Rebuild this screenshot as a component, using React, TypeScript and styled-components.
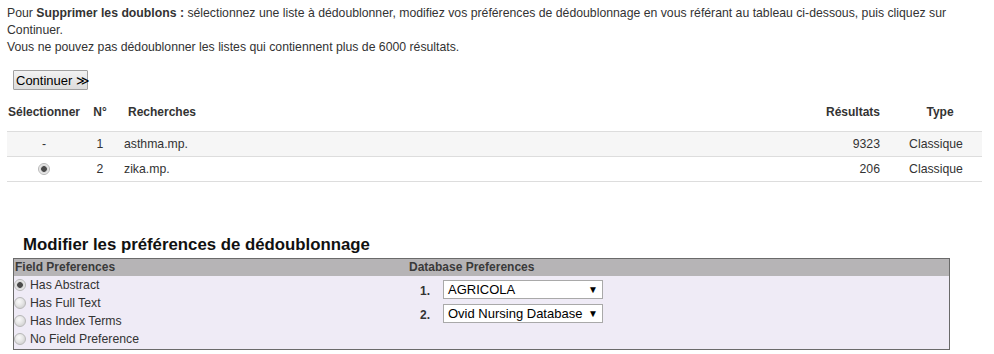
import React from 'react';
import styled, {createGlobalStyle} from 'styled-components';

const GlobalStyle = createGlobalStyle`
  body {
    margin: 0;
    background: #fff;
    font-family: "Liberation Sans", Arial, sans-serif;
    font-size: 12.25px;
    color: #333;
  }
`

const Page = styled.div`
  padding: 5px 7px 0 7px;
  width: 994px;
  box-sizing: border-box;
`

const Intro = styled.p`
  margin: 0;
  line-height: 17px;
  width: 975px;
`

const ContinueButton = styled.button`
  margin: 14px 0 0 6px;
  height: 20px;
  width: 75px;
  padding: 0 2px;
  font-family: "Liberation Sans", Arial, sans-serif;
  font-size: 13px;
  color: #000;
  background: linear-gradient(#f2f2f2, #dcdcdc);
  border: 1px solid #a0a0a0;
  border-radius: 1px;
  white-space: nowrap;
`

const ResultsTable = styled.table`
  margin-top: 3px;
  width: 975px;
  border-collapse: collapse;
  table-layout: fixed;
`

const HeadCell = styled.th<{align?: string; width?: number; pad?: string}>`
  text-align: ${(p) => p.align || 'left'};
  ${(p) => (p.width ? `width: ${p.width}px;` : '')}
  font-size: 12px;
  font-weight: bold;
  height: 38px;
  padding: ${(p) => p.pad || '0'};
  vertical-align: middle;
  color: #333;
  white-space: nowrap;
  box-sizing: border-box;
`

const Row = styled.tr<{shaded?: boolean}>`
  background: ${(p) => (p.shaded ? '#f6f6f6' : '#fff')};
  border-top: 1px solid #ddd;
  border-bottom: 1px solid #ddd;
`

const Cell = styled.td<{align?: string; pad?: string}>`
  text-align: ${(p) => p.align || 'left'};
  height: 24px;
  padding: ${(p) => p.pad || '0'};
  vertical-align: middle;
`

const RadioDot = styled.span<{checked?: boolean}>`
  display: inline-block;
  flex: none;
  width: 12px;
  height: 12px;
  border-radius: 50%;
  border: 1px solid #b8b8b8;
  background: ${(p) => (p.checked
      ? 'radial-gradient(circle, #4a4a4a 0 2.5px, #d4d4d4 3.2px, #f0f0f0 5px)'
      : 'radial-gradient(circle at 40% 35%, #fafafa 0, #e6e6e6 4px, #d8d8d8 6px)')};
  vertical-align: middle;
  box-sizing: border-box;
`

const SectionTitle = styled.h2`
  margin: 53px 0 0 16px;
  font-size: 16.8px;
  line-height: 20px;
  color: #111;
`

const PrefPanel = styled.div`
  margin: 3px 0 0 6px;
  width: 937px;
  height: 92px;
  border: 1px solid #6a6a6a;
  background: #efebf6;
  display: grid;
  grid-template-columns: 394px 1fr;
  grid-template-rows: 17px 1fr;
  box-sizing: border-box;
`

const PanelHead = styled.div<{indent?: number}>`
  background: #b6b4b6;
  font-size: 12px;
  font-weight: bold;
  color: #3a3a3a;
  line-height: 17px;
  padding-left: ${(p) => p.indent || 1}px;
`

const FieldList = styled.div`
  display: flex;
  flex-direction: column;
`

const FieldOption = styled.label`
  display: flex;
  align-items: center;
  gap: 4px;
  height: 18px;
  color: #333;
  line-height: 18px;
`

const DbList = styled.div`
  display: flex;
  flex-direction: column;
  gap: 5px;
  padding: 4px 0 0 12px;
`

const DbRow = styled.div`
  display: flex;
  align-items: center;
  gap: 9px;
`

const DbIndex = styled.span`
  font-size: 12px;
  font-weight: bold;
  color: #333;
  width: 14px;
  padding-top: 4px;
`

const FakeSelect = styled.div`
  display: flex;
  align-items: center;
  justify-content: space-between;
  width: 160px;
  height: 19px;
  box-sizing: border-box;
  border: 1px solid #a9a9a9;
  background: #fff;
  padding: 0 4px 0 4px;
  font-size: 13px;
  color: #000;
`

const Arrow = styled.span`
  font-size: 10px;
`

export default function App() {
    const fields = ['Has Abstract', 'Has Full Text', 'Has Index Terms', 'No Field Preference'];
    return (
        <Page>
            <GlobalStyle/>
            <Intro>
                Pour <b>Supprimer les doublons :</b> sélectionnez une liste à dédoublonner, modifiez vos préférences de
                dédoublonnage en vous référant au tableau ci-dessous, puis cliquez sur Continuer.
                <br/>
                Vous ne pouvez pas dédoublonner les listes qui contiennent plus de 6000 résultats.
            </Intro>
            <ContinueButton>Continuer ≫</ContinueButton>
            <ResultsTable>
                <thead>
                <tr>
                    <HeadCell width={74} pad={'0 0 0 1px'}>Sélectionner</HeadCell>
                    <HeadCell width={38} align={'center'}>N°</HeadCell>
                    <HeadCell pad={'0 0 0 9px'}>Recherches</HeadCell>
                    <HeadCell align={'right'} width={90} pad={'0 18px 0 0'}>Résultats</HeadCell>
                    <HeadCell align={'center'} width={84}>Type</HeadCell>
                </tr>
                </thead>
                <tbody>
                <Row shaded>
                    <Cell align={'center'}>-</Cell>
                    <Cell align={'center'}>1</Cell>
                    <Cell pad={'0 0 0 5px'}>asthma.mp.</Cell>
                    <Cell align={'right'} pad={'0 18px 0 0'}>9323</Cell>
                    <Cell align={'center'} pad={'0 8px 0 0'}>Classique</Cell>
                </Row>
                <Row>
                    <Cell align={'center'}><RadioDot checked/></Cell>
                    <Cell align={'center'}>2</Cell>
                    <Cell pad={'0 0 0 5px'}>zika.mp.</Cell>
                    <Cell align={'right'} pad={'0 18px 0 0'}>206</Cell>
                    <Cell align={'center'} pad={'0 8px 0 0'}>Classique</Cell>
                </Row>
                </tbody>
            </ResultsTable>
            <SectionTitle>Modifier les préférences de dédoublonnage</SectionTitle>
            <PrefPanel>
                <PanelHead>Field Preferences</PanelHead>
                <PanelHead indent={0}>Database Preferences</PanelHead>
                <FieldList>
                    {fields.map((f, i) => (
                        <FieldOption key={f}>
                            <RadioDot checked={i === 0}/>
                            {f}
                        </FieldOption>
                    ))}
                </FieldList>
                <DbList>
                    <DbRow>
                        <DbIndex>1.</DbIndex>
                        <FakeSelect>AGRICOLA<Arrow>▼</Arrow></FakeSelect>
                    </DbRow>
                    <DbRow>
                        <DbIndex>2.</DbIndex>
                        <FakeSelect>Ovid Nursing Database<Arrow>▼</Arrow></FakeSelect>
                    </DbRow>
                </DbList>
            </PrefPanel>
        </Page>
    );
}
